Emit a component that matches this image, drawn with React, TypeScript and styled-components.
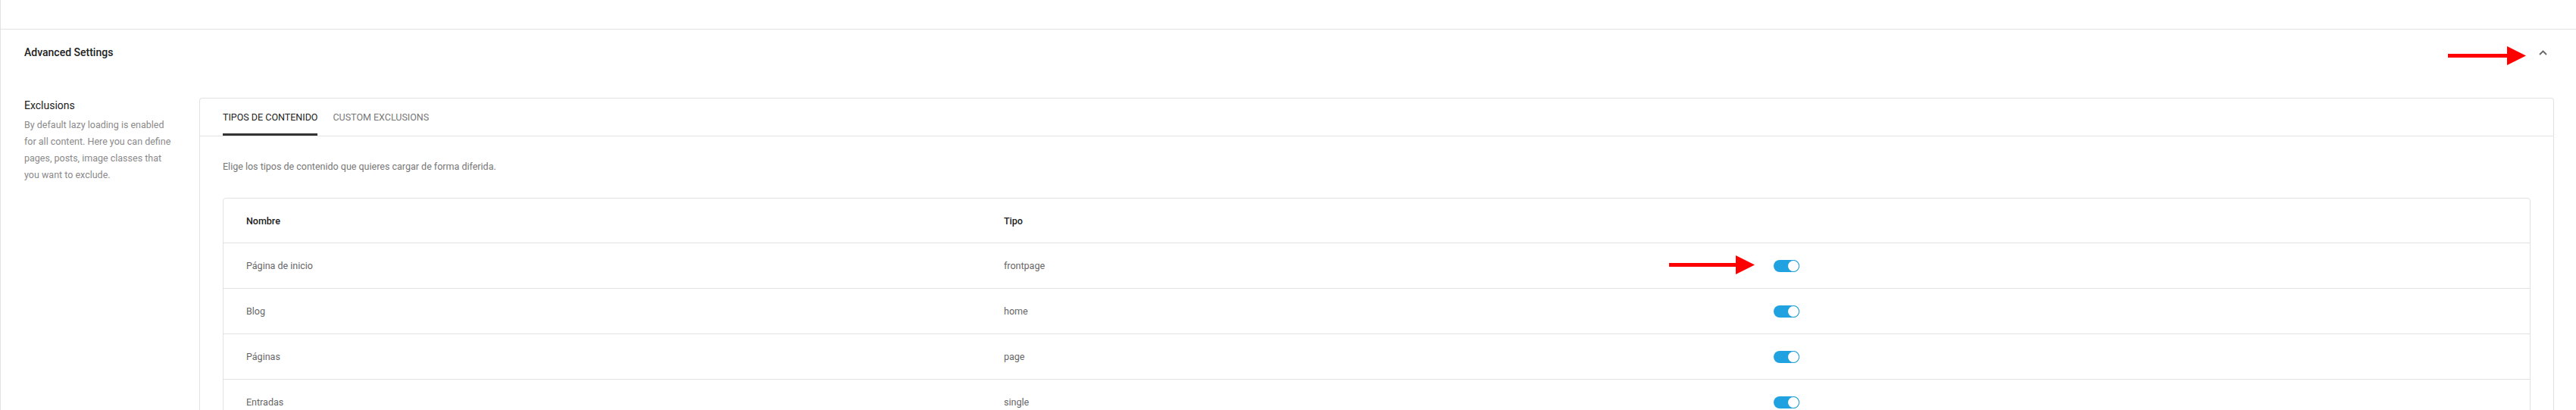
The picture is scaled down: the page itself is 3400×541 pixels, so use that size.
import { FC } from "react";
import styled, { createGlobalStyle } from "styled-components";

const GlobalStyle = createGlobalStyle`
  html, body {
    margin: 0;
    padding: 0;
    background: #ffffff;
    overflow: hidden;
  }
  body {
    font-family: Roboto, "Liberation Sans", Arial, sans-serif;
    color: #333333;
  }
`;

const Page = styled.div`
  position: relative;
  width: 3400px;
  min-height: 541px;
  border-left: 1px solid #e2e2e2;
  box-sizing: border-box;
`;

const PrevPanel = styled.div`
  height: 38px;
  border-bottom: 1px solid #e2e2e2;
`;

const SectionHeader = styled.div`
  display: flex;
  align-items: center;
  justify-content: space-between;
  height: 60px;
  padding: 0 37px 0 31px;
`;

const SectionTitle = styled.h2`
  margin: 0;
  font-size: 14px;
  font-weight: 500;
  color: #222222;
`;

const Toggle = styled.button`
  display: flex;
  align-items: center;
  justify-content: center;
  width: 14px;
  height: 14px;
  padding: 0;
  border: none;
  background: none;
  color: #666666;
`;

const SectionBody = styled.div`
  display: flex;
  padding: 30px 29px 0 31px;
`;

const Aside = styled.div`
  width: 231px;
  flex-shrink: 0;
  padding-right: 35px;
  box-sizing: border-box;
`;

const AsideTitle = styled.h3`
  margin: 1px 0 6px;
  font-size: 14px;
  font-weight: 400;
  line-height: 18px;
  color: #222222;
`;

const AsideText = styled.p`
  margin: 0;
  font-size: 12.5px;
  line-height: 22px;
  color: #8a8a8a;
`;

const Card = styled.div`
  flex: 1;
  border: 1px solid #e2e2e2;
  border-bottom: none;
  border-radius: 4px 4px 0 0;
`;

const TabBar = styled.div`
  display: flex;
  gap: 20px;
  height: 49px;
  padding: 0 30px;
  border-bottom: 1px solid #e2e2e2;
`;

const Tab = styled.div<{ $active?: boolean }>`
  display: flex;
  align-items: center;
  font-size: 12.5px;
  text-transform: uppercase;
  color: ${(props) => (props.$active ? "#222222" : "#777777")};
  box-shadow: ${(props) => (props.$active ? "inset 0 -3px 0 #333333" : "none")};
`;

const CardBody = styled.div`
  padding: 30px 30px 0;
`;

const Intro = styled.p`
  margin: 0 0 31px;
  font-size: 12.5px;
  line-height: 20px;
  color: #777777;
`;

const Table = styled.div`
  border: 1px solid #e2e2e2;
  border-radius: 4px;
`;

const Row = styled.div<{ $head?: boolean }>`
  display: grid;
  grid-template-columns: 1000px 1016px 1fr;
  align-items: center;
  height: ${(props) => (props.$head ? "58px" : "59px")};
  padding: 0 30px;
  border-top: ${(props) => (props.$head ? "none" : "1px solid #e2e2e2")};
  font-size: 12.5px;
  font-weight: ${(props) => (props.$head ? 500 : 400)};
  color: ${(props) => (props.$head ? "#222222" : "#666666")};
`;

const Switch = styled.span`
  position: relative;
  display: block;
  width: 34px;
  height: 16px;
  border-radius: 8px;
  background: #1fa2df;
`;

const Knob = styled.span`
  position: absolute;
  top: 0;
  right: 0;
  width: 14px;
  height: 14px;
  border-radius: 50%;
  background: #ffffff;
  border: 1px solid #1fa2df;
`;

const Annotation = styled.svg<{ $left: number; $top: number }>`
  position: absolute;
  left: ${(props) => props.$left}px;
  top: ${(props) => props.$top}px;
  overflow: visible;
`;

const RedArrow: FC<{ left: number; top: number; width: number }> = ({
  left,
  top,
  width,
}) => (
  <Annotation $left={left} $top={top} width={width} height={25}>
    <rect x={0} y={10} width={width - 24} height={5} fill="#ff0000" />
    <polygon points={`${width - 25},0 ${width},12.5 ${width - 25},25`} fill="#ff0000" />
  </Annotation>
);

const rows = [
  { name: "Página de inicio", type: "frontpage" },
  { name: "Blog", type: "home" },
  { name: "Páginas", type: "page" },
  { name: "Entradas", type: "single" },
];

const App: FC = () => {
  return (
    <>
      <GlobalStyle />
      <Page>
        <PrevPanel />
        <SectionHeader>
          <SectionTitle>Advanced Settings</SectionTitle>
          <Toggle aria-label="Collapse">
            <svg width="11" height="7" viewBox="0 0 11 7" fill="none">
              <path d="M1 6 L5.5 1.5 L10 6" stroke="currentColor" strokeWidth="1.8" />
            </svg>
          </Toggle>
        </SectionHeader>
        <SectionBody>
          <Aside>
            <AsideTitle>Exclusions</AsideTitle>
            <AsideText>
              By default lazy loading is enabled for all content. Here you can
              define pages, posts, image classes that you want to exclude.
            </AsideText>
          </Aside>
          <Card>
            <TabBar>
              <Tab $active>Tipos de contenido</Tab>
              <Tab>Custom exclusions</Tab>
            </TabBar>
            <CardBody>
              <Intro>Elige los tipos de contenido que quieres cargar de forma diferida.</Intro>
              <Table>
                <Row $head>
                  <span>Nombre</span>
                  <span>Tipo</span>
                  <span />
                </Row>
                {rows.map((row) => (
                  <Row key={row.type}>
                    <span>{row.name}</span>
                    <span>{row.type}</span>
                    <Switch>
                      <Knob />
                    </Switch>
                  </Row>
                ))}
              </Table>
            </CardBody>
          </Card>
        </SectionBody>
        <RedArrow left={3230} top={61} width={103} />
        <RedArrow left={2202} top={337} width={113} />
      </Page>
    </>
  );
};

export default App;
